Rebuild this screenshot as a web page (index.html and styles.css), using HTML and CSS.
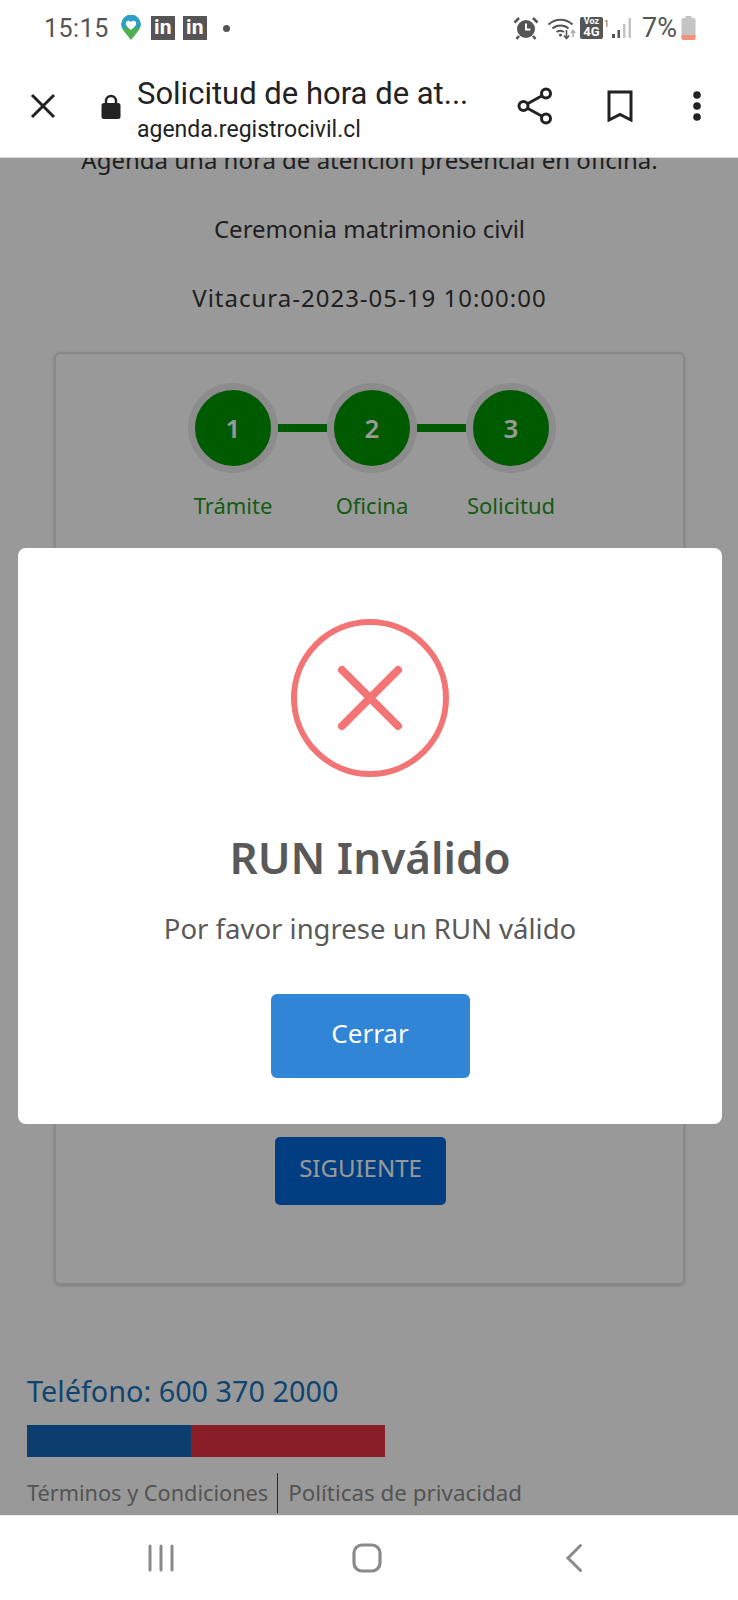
FILE: index.html
```html
<!DOCTYPE html>
<html lang="es">
<head>
    <meta charset="UTF-8">
    <meta name="viewport" content="width=device-width, initial-scale=1.0">
    <title>Solicitud de hora de atención</title>
    <link rel="stylesheet" href="styles.css">
</head>
<body>
    <div class="status-bar">
        <div class="status-left">
            <span class="status-time">15:15</span>
            <svg class="icon-pin" width="22" height="26" viewBox="0 0 22 26">
                <path d="M11 25 L3 15 A9.6 9.6 0 1 1 19 15 Z" fill="#4caf50"/>
                <path d="M2.2 13 A9.6 9.6 0 1 1 19.8 13 L15 13 L7 13 Z" fill="#2b9fc4"/>
                <path d="M11 15 C6 11 5.5 9.5 6 7.5 C6.8 5.5 9.5 5.3 11 7 C12.5 5.3 15.2 5.5 16 7.5 C16.5 9.5 16 11 11 15 Z" fill="#fff"/>
            </svg>
            <span class="in-badge">in</span>
            <span class="in-badge">in</span>
            <span class="status-dot"></span>
        </div>
        <div class="status-right">
            <svg width="26" height="24" viewBox="0 0 26 24">
                <circle cx="13" cy="13" r="9" fill="#555"/>
                <path d="M13 7.5 V13.5 H17.5" fill="none" stroke="#fff" stroke-width="2"/>
                <path d="M1.5 6.5 L6 2 M24.5 6.5 L20 2 M6 20 L3.5 23 M20 20 L22.5 23" stroke="#555" stroke-width="2.6" fill="none"/>
            </svg>
            <svg class="icon-wifi" width="30" height="24" viewBox="0 0 30 24">
                <path d="M1.5 8.5 C8 2 19 2 25.5 8.5 M5.5 12.5 C10 8.5 17 8.5 21.5 12.5 M9.5 16 C11.5 14.3 15 14.3 17 16" fill="none" stroke="#555" stroke-width="2"/>
                <path d="M19.5 14 V22 M16.8 19.5 L19.5 22.5 L22.2 19.5" fill="none" stroke="#555" stroke-width="1.6"/>
                <path d="M26 21 V15 M24 17 L26 14.5 L28 17" fill="none" stroke="#aaa" stroke-width="1.5"/>
                <circle cx="13.5" cy="19" r="1.6" fill="#555"/>
            </svg>
            <span class="net-badge"><span>Voz</span><span class="net-4g">4G</span></span>
            <span class="net-sim">1</span>
            <svg class="icon-signal" width="20" height="22" viewBox="0 0 20 22">
                <rect x="0" y="17" width="3" height="4" fill="#555"/>
                <rect x="5.500" y="13" width="2.500" height="8" fill="#555"/>
                <rect x="11" y="7" width="2.500" height="14" fill="#c4c4c4"/>
                <rect x="16.500" y="1" width="2.500" height="20" fill="#c4c4c4"/>
            </svg>
            <span class="status-battery">7%</span>
            <svg width="15" height="24" viewBox="0 0 15 24">
                <rect x="4.500" y="0" width="6" height="3" fill="#c4c4c4"/>
                <rect x="0.500" y="2" width="14" height="22" rx="2" fill="#c4c4c4"/>
                <path d="M0.500 19 H14.500 V22 A2 2 0 0 1 12.500 24 H2.500 A2 2 0 0 1 0.500 22 Z" fill="#f4937c"/>
            </svg>
        </div>
    </div>

    <div class="browser-bar">
        <svg class="icon-close" width="26" height="26" viewBox="0 0 26 26">
            <path d="M2 2 L24 24 M24 2 L2 24" stroke="#222" stroke-width="3" fill="none"/>
        </svg>
        <svg class="icon-lock" width="20" height="26" viewBox="0 0 20 26">
            <path d="M5 10 V7 A5 5 0 0 1 15 7 V10" fill="none" stroke="#222" stroke-width="2.400"/>
            <rect x="0.500" y="9" width="19" height="16" rx="2.500" fill="#222"/>
        </svg>
        <div class="browser-title">
            <div class="browser-page">Solicitud de hora de at...</div>
            <div class="browser-url">agenda.registrocivil.cl</div>
        </div>
        <svg class="icon-share" width="36" height="38" viewBox="0 0 36 38">
            <circle cx="6.500" cy="19" r="4.500" fill="none" stroke="#222" stroke-width="3"/>
            <circle cx="29" cy="6.500" r="4.500" fill="none" stroke="#222" stroke-width="3"/>
            <circle cx="29" cy="31.500" r="4.500" fill="none" stroke="#222" stroke-width="3"/>
            <path d="M10.500 16.800 L25 8.700 M10.500 21.200 L25 29.300" stroke="#222" stroke-width="3" fill="none"/>
        </svg>
        <svg class="icon-bookmark" width="26" height="32" viewBox="0 0 26 32">
            <path d="M2 2 H24 V30 L13 24.500 L2 30 Z" fill="none" stroke="#222" stroke-width="3"/>
        </svg>
        <svg class="icon-more" width="8" height="30" viewBox="0 0 8 30">
            <circle cx="4" cy="4" r="3.800" fill="#222"/>
            <circle cx="4" cy="15" r="3.800" fill="#222"/>
            <circle cx="4" cy="26" r="3.800" fill="#222"/>
        </svg>
    </div>

    <div class="page">
        <div class="page-content">
            <p class="intro">Agenda una hora de atención presencial en oficina.</p>
            <p class="intro">Ceremonia matrimonio civil</p>
            <p class="intro intro-date">Vitacura-2023-05-19 10:00:00</p>

            <div class="card">
                <div class="stepper">
                    <span class="step-circle">1</span>
                    <span class="step-line"></span>
                    <span class="step-circle">2</span>
                    <span class="step-line"></span>
                    <span class="step-circle">3</span>
                </div>
                <div class="step-labels">
                    <span>Trámite</span>
                    <span>Oficina</span>
                    <span>Solicitud</span>
                </div>
                <button class="btn-next" type="button">SIGUIENTE</button>
            </div>

            <div class="footer-phone">Teléfono: 600 370 2000</div>
            <div class="flag-bar"><span class="flag-blue"></span><span class="flag-red"></span></div>
            <div class="footer-links">
                <a href="#">Términos y Condiciones</a>
                <a href="#">Políticas de privacidad</a>
            </div>
        </div>

        <div class="overlay">
            <div class="modal">
                <svg class="modal-icon" width="158" height="158" viewBox="0 0 158 158">
                    <circle cx="79" cy="79" r="76" fill="none" stroke="#f27474" stroke-width="6"/>
                    <path d="M51 51 L107 107 M107 51 L51 107" stroke="#f27474" stroke-width="8" stroke-linecap="round" fill="none"/>
                </svg>
                <h2 class="modal-title">RUN Inválido</h2>
                <p class="modal-text">Por favor ingrese un RUN válido</p>
                <button class="btn-close" type="button">Cerrar</button>
            </div>
        </div>
    </div>

    <div class="nav-bar">
        <svg width="28" height="28" viewBox="0 0 28 28">
            <path d="M3 2 V26 M14 2 V26 M25 2 V26" stroke="#8a8a8a" stroke-width="3" stroke-linecap="round" fill="none"/>
        </svg>
        <svg class="nav-home" width="30" height="30" viewBox="0 0 30 30">
            <rect x="2" y="2" width="26" height="26" rx="8" fill="none" stroke="#8a8a8a" stroke-width="3.200"/>
        </svg>
        <svg width="18" height="30" viewBox="0 0 18 30">
            <path d="M15.500 2.500 L3 15 L15.500 27.500" stroke="#8a8a8a" stroke-width="3" stroke-linecap="round" fill="none"/>
        </svg>
    </div>
</body>
</html>
```

FILE: styles.css
```css
* {
    box-sizing: border-box;
}

html, body {
    margin: 0;
    padding: 0;
}

body {
    width: 738px;
    height: 1600px;
    display: flex;
    flex-direction: column;
    overflow: hidden;
    background: white;
    font-family: "Noto Sans", sans-serif;
}

/* phone status bar */
.status-bar {
    height: 57px;
    flex: none;
    display: flex;
    justify-content: space-between;
    align-items: center;
    padding: 0 42px 1px 44px;
    color: #555;
    font-family: Roboto, sans-serif;
}

.status-left,
.status-right {
    display: flex;
    align-items: center;
}

.status-time {
    font-size: 25px;
    letter-spacing: 0.5px;
}

.icon-pin {
    margin-left: 11px;
}

.in-badge {
    width: 24px;
    height: 24px;
    margin-left: 8px;
    background: #555;
    color: white;
    font-size: 21px;
    font-weight: 700;
    line-height: 23px;
    text-align: center;
}

.icon-pin + .in-badge {
    margin-left: 9px;
}

.status-dot {
    width: 7px;
    height: 7px;
    margin-left: 16px;
    border-radius: 50%;
    background: #555;
}

.icon-wifi {
    margin-left: 8px;
}

.net-badge {
    width: 23px;
    height: 22px;
    margin-left: 3px;
    display: flex;
    flex-direction: column;
    align-items: center;
    border-radius: 2px;
    background: #555;
    color: white;
    font-size: 9px;
    font-weight: 700;
    line-height: 9px;
}

.net-4g {
    font-size: 13px;
    line-height: 12px;
}

.net-sim {
    align-self: flex-end;
    margin: 0 3px 15px 1px;
    font-size: 9px;
}

.status-battery {
    margin: 0 4px 0 10px;
    font-size: 27px;
}

/* custom tab toolbar */
.browser-bar {
    height: 101px;
    flex: none;
    display: flex;
    align-items: center;
    padding: 0 35px 2px 30px;
    border-bottom: 1px solid #d8d8d8;
}

.icon-lock {
    margin-left: 45px;
    margin-top: 2px;
}

.browser-title {
    width: 380px;
    margin-left: 16px;
    margin-top: 5px;
    color: #222;
    font-family: Roboto, sans-serif;
}

.browser-page {
    font-size: 31px;
    line-height: 38px;
    margin-top: 1px;
}

.browser-url {
    font-size: 23px;
    line-height: 28px;
    margin-top: 3px;
}

.icon-bookmark {
    margin-left: 54px;
}

.icon-more {
    margin-left: 60px;
}

/* page behind the dialog */
.page {
    flex: 1;
    position: relative;
    overflow: hidden;
}

.page-content {
    margin-top: -15px;
    padding: 0 26px 0 27px;
}

.intro {
    margin: 0 0 35px;
    color: #363636;
    font-size: 24px;
    line-height: 34px;
    text-align: center;
}

.intro-date {
    letter-spacing: 1px;
}

.card {
    height: 933px;
    margin: 37px 27px 0 27px;
    padding: 29px 0 78px;
    display: flex;
    flex-direction: column;
    align-items: center;
    border: 2px solid #e4e4e4;
    border-radius: 6px;
    box-shadow: 0 1px 3px rgba(0, 0, 0, 0.2);
}

.stepper {
    display: flex;
    align-items: center;
    margin-left: 5px;
}

.step-circle {
    width: 90px;
    height: 90px;
    display: flex;
    justify-content: center;
    align-items: center;
    border: 7px solid #e9e9e9;
    border-radius: 50%;
    background-color: #009600;
    color: white;
    font-size: 26px;
    font-weight: 600;
}

.step-line {
    width: 49px;
    height: 8px;
    background: #009600;
}

.step-labels {
    width: 417px;
    margin-top: 15px;
    margin-left: 5px;
    display: grid;
    grid-template-columns: repeat(3, 1fr);
    color: #1f9a1f;
    font-size: 22px;
    line-height: 34px;
    text-align: center;
}

.btn-next {
    width: 171px;
    height: 68px;
    margin-top: auto;
    margin-right: 18px;
    padding-bottom: 8px;
    border: none;
    border-radius: 5px;
    background-color: #0068d8;
    color: white;
    font-family: "Noto Sans", sans-serif;
    font-size: 24px;
}

.footer-phone {
    margin-top: 86px;
    color: #1a74bb;
    font-size: 28.8px;
    line-height: 40px;
}

.flag-bar {
    width: 358px;
    height: 32px;
    margin-top: 14px;
    display: flex;
}

.flag-blue {
    width: 164px;
    background: #1569ba;
}

.flag-red {
    flex: 1;
    background: #e63542;
}

.footer-links {
    margin-top: 16px;
    display: flex;
    font-size: 21.7px;
    line-height: 40px;
}

.footer-links a {
    color: #8c8c8c;
    text-decoration: none;
}

.footer-links a + a {
    margin-left: 9px;
    padding-left: 10px;
    border-left: 1px solid #444;
    font-size: 22.4px;
}

/* dialog */
.overlay {
    position: absolute;
    inset: 0;
    padding: 390px 16px 0 18px;
    background: rgba(0, 0, 0, 0.4);
}

.modal {
    height: 576px;
    padding-top: 71px;
    display: flex;
    flex-direction: column;
    align-items: center;
    border-radius: 8px;
    background: white;
    color: #595959;
}

.modal-title {
    margin: 45px 0 0;
    font-size: 44px;
    font-weight: 600;
    line-height: 70px;
}

.modal-text {
    margin: 14px 0 0;
    font-size: 27.5px;
    line-height: 46px;
}

.btn-close {
    width: 199px;
    height: 84px;
    margin-top: 42px;
    padding-bottom: 7px;
    border: none;
    border-radius: 6px;
    background-color: #3085d6;
    color: white;
    font-family: "Noto Sans", sans-serif;
    font-size: 26px;
}

/* android buttons */
.nav-bar {
    height: 85px;
    flex: none;
    display: flex;
    justify-content: space-between;
    align-items: center;
    padding: 0 155px 0 147px;
    border-top: 1px solid #e8e8e8;
    background: white;
}

.nav-home {
    margin-right: 6px;
}
```
